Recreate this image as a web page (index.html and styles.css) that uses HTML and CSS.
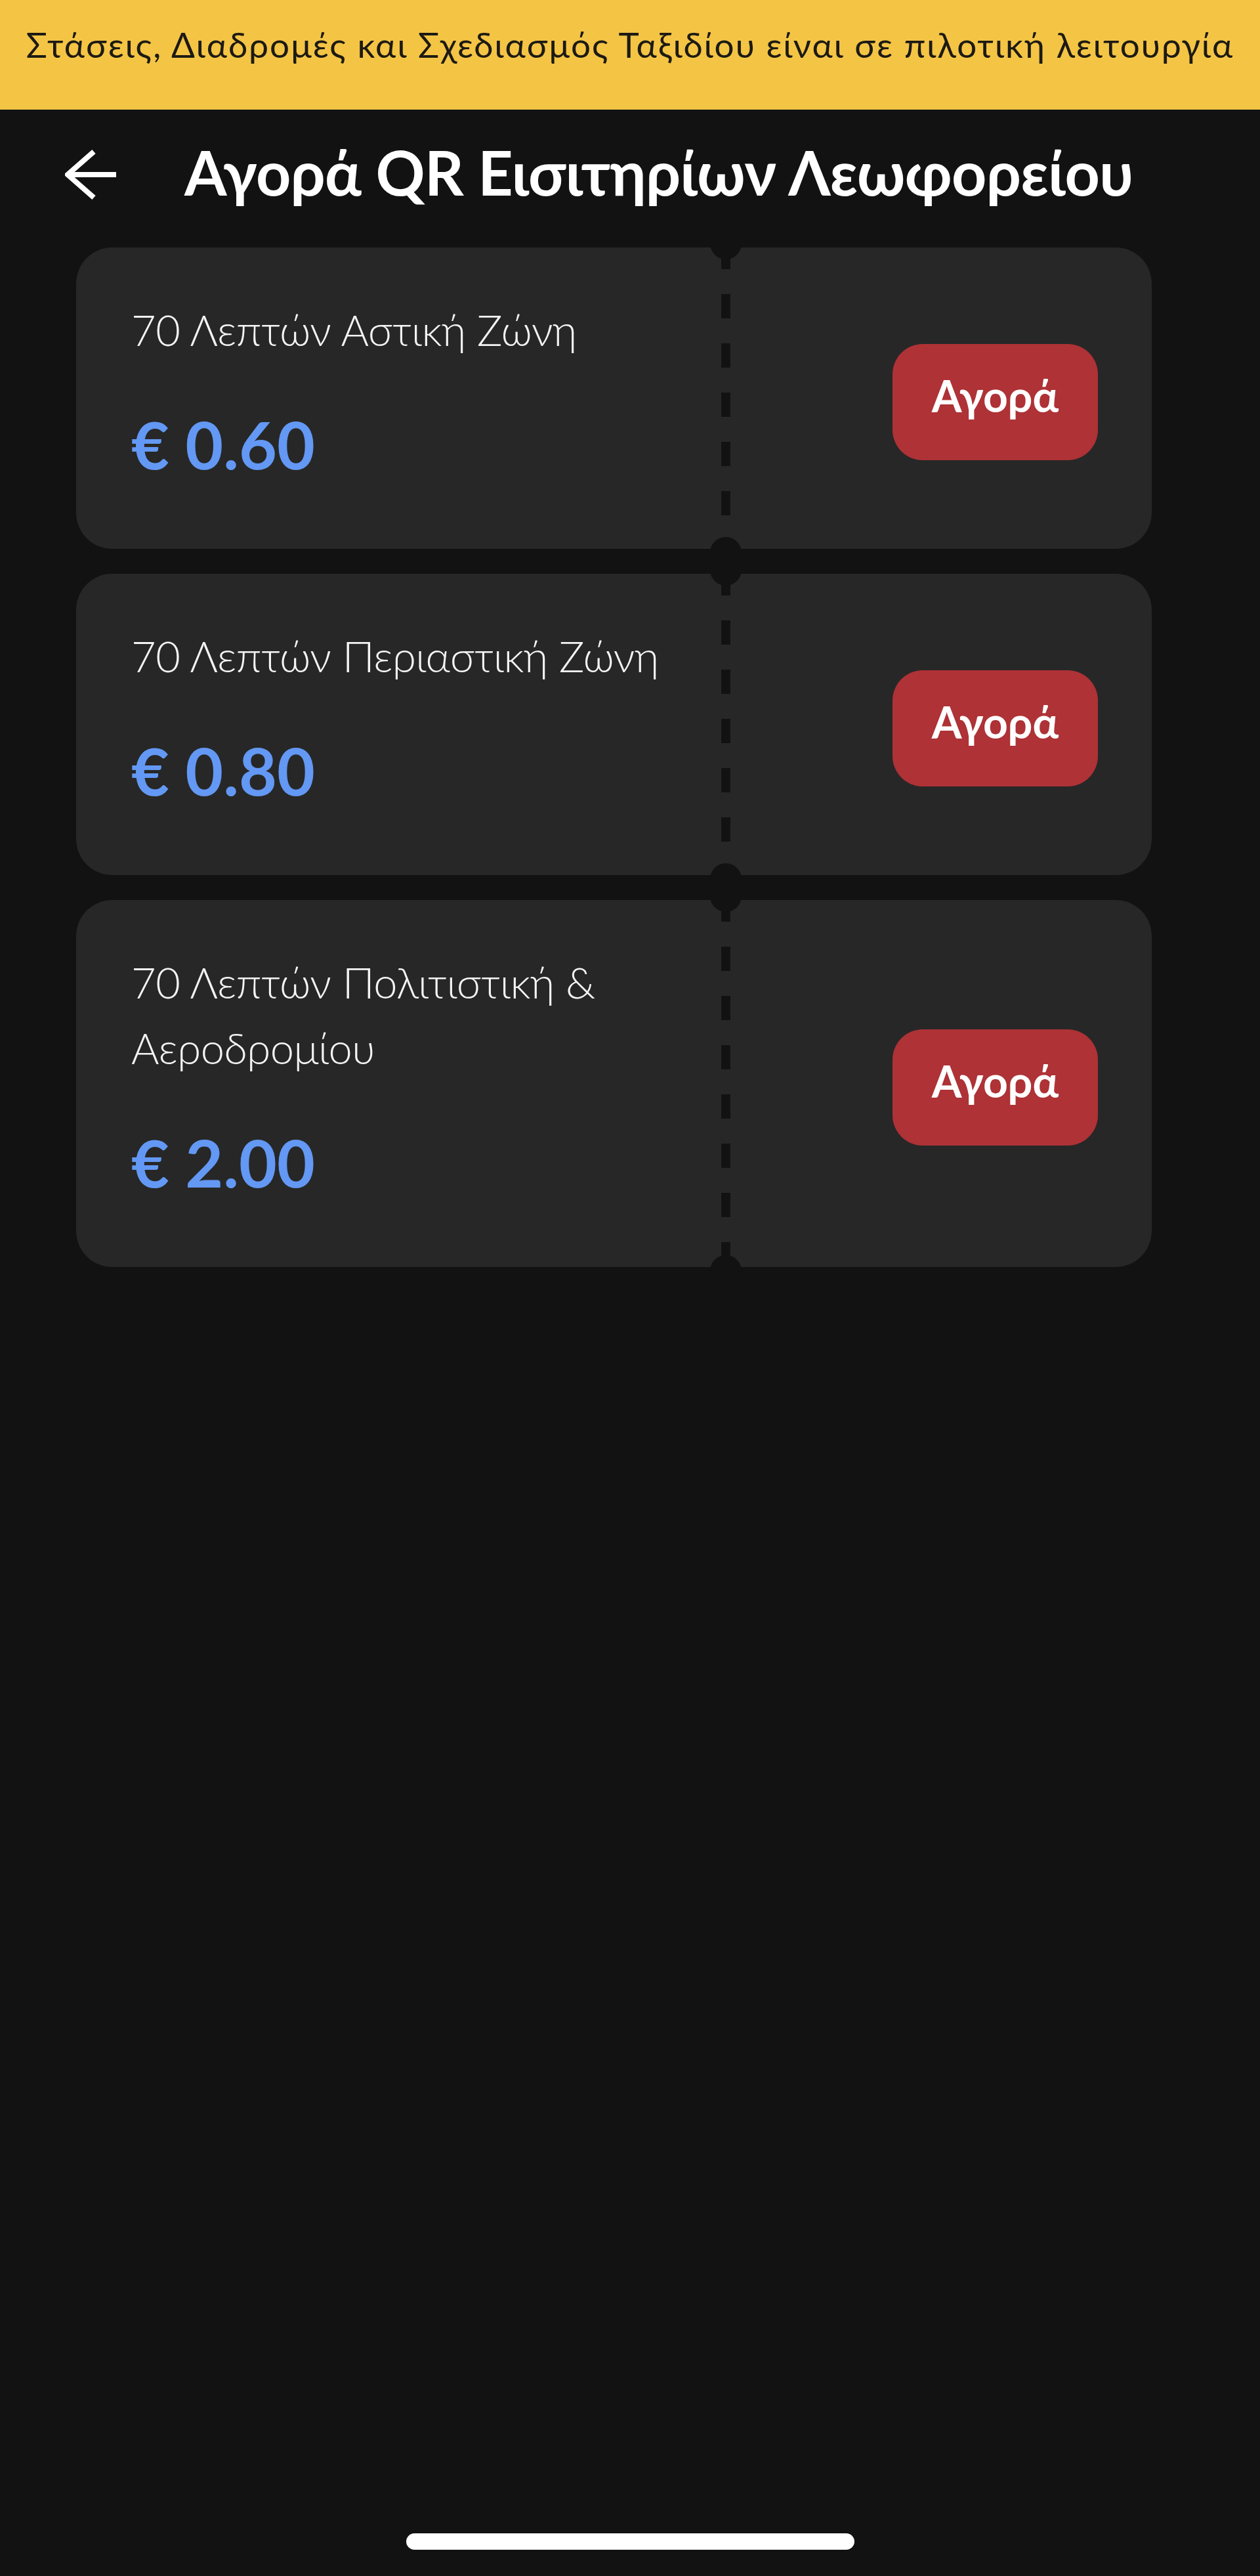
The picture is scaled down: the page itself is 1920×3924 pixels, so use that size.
FILE: index.html
```html
<!DOCTYPE html>
<html lang="el">
<head>
<meta charset="utf-8">
<title>Αγορά QR Εισιτηρίων Λεωφορείου</title>
<link rel="stylesheet" href="styles.css">
</head>
<body>
<div class="screen">
  <div class="banner">Στάσεις, Διαδρομές και Σχεδιασμός Ταξιδίου είναι σε πιλοτική λειτουργία</div>

  <header class="topbar">
    <svg class="back" viewBox="0 0 78 78" aria-hidden="true">
      <path d="M4 39 H78 M44 4 L4 39 L44 74" fill="none" stroke="#ffffff" stroke-width="8" stroke-linejoin="miter"/>
    </svg>
    <h1 class="title">Αγορά QR Εισιτηρίων Λεωφορείου</h1>
  </header>

  <main class="tickets">
    <div class="ticket">
      <div class="ticket-info">
        <div class="ticket-name">70 Λεπτών Αστική Ζώνη</div>
        <div class="ticket-price">€ 0.60</div>
      </div>
      <div class="perforation"></div>
      <div class="ticket-action"><button class="buy">Αγορά</button></div>
    </div>

    <div class="ticket">
      <div class="ticket-info">
        <div class="ticket-name">70 Λεπτών Περιαστική Ζώνη</div>
        <div class="ticket-price">€ 0.80</div>
      </div>
      <div class="perforation"></div>
      <div class="ticket-action"><button class="buy">Αγορά</button></div>
    </div>

    <div class="ticket">
      <div class="ticket-info">
        <div class="ticket-name">70 Λεπτών Πολιτιστική &amp; Αεροδρομίου</div>
        <div class="ticket-price">€ 2.00</div>
      </div>
      <div class="perforation"></div>
      <div class="ticket-action"><button class="buy">Αγορά</button></div>
    </div>
  </main>

  <div class="home-indicator"></div>
</div>
</body>
</html>
```
FILE: styles.css
```css
* { box-sizing: border-box; }

html, body {
  margin: 0;
  padding: 0;
  background: #121212;
}

body {
  font-family: "Lato", "Roboto", "Noto Sans", sans-serif;
  color: #ffffff;
}

.screen {
  min-height: 3924px;
  display: flex;
  flex-direction: column;
}

/* Yellow pilot banner */
.banner {
  height: 167px;
  padding-top: 36px;
  background: #f4c445;
  color: #1c1a14;
  font-size: 53px;
  line-height: 64px;
  letter-spacing: 2px;
  text-align: center;
  white-space: nowrap;
}

/* Header */
.topbar {
  height: 210px;
  padding: 39px 0 0 99px;
  display: flex;
  align-items: flex-start;
  gap: 104px;
}

.back {
  width: 78px;
  height: 78px;
  margin-top: 21px;
  flex: 0 0 auto;
}

.title {
  margin: 0;
  font-size: 93px;
  font-weight: 700;
  line-height: 112px;
  letter-spacing: -0.6px;
  white-space: nowrap;
}

/* Ticket list */
.tickets {
  display: flex;
  flex-direction: column;
  gap: 38px;
  padding: 0 165px 0 116px;
}

.ticket {
  display: flex;
  background: #272727;
  border-radius: 55px;
}

.ticket-info {
  flex: 0 0 983px;
  padding: 75px 30px 100px 84px;
}

.ticket-name {
  max-width: 840px;
  font-size: 65px;
  font-weight: 300;
  line-height: 100px;
  letter-spacing: -0.5px;
  color: #f4f4f4;
}

.ticket-price {
  margin-top: 64px;
  font-size: 100px;
  font-weight: 700;
  line-height: 120px;
  color: #6398f4;
}

/* Perforated divider with punched notches */
.perforation {
  position: relative;
  flex: 0 0 14px;
  background: repeating-linear-gradient(
    to bottom,
    #121212 0,
    #121212 37px,
    transparent 37px,
    transparent 75px
  );
  background-position: 0 -4px;
}

.perforation::before,
.perforation::after {
  content: "";
  position: absolute;
  left: -17px;
  width: 48px;
  height: 48px;
  border-radius: 50%;
  background: #121212;
}

.perforation::before { top: -30px; }
.perforation::after { bottom: -30px; }

.ticket-action {
  flex: 1 1 auto;
  display: flex;
  align-items: center;
  justify-content: flex-end;
  padding: 12px 82px 0 0;
}

.buy {
  width: 313px;
  height: 177px;
  padding: 0 0 20px;
  border: 0;
  border-radius: 46px;
  background: #ae3236;
  color: #ffffff;
  font-family: inherit;
  font-size: 66px;
  font-weight: 700;
  line-height: 80px;
  display: flex;
  align-items: center;
  justify-content: center;
}

/* iOS home indicator */
.home-indicator {
  width: 683px;
  height: 25px;
  margin: auto auto 40px;
  border-radius: 13px;
  background: #ffffff;
}
```
